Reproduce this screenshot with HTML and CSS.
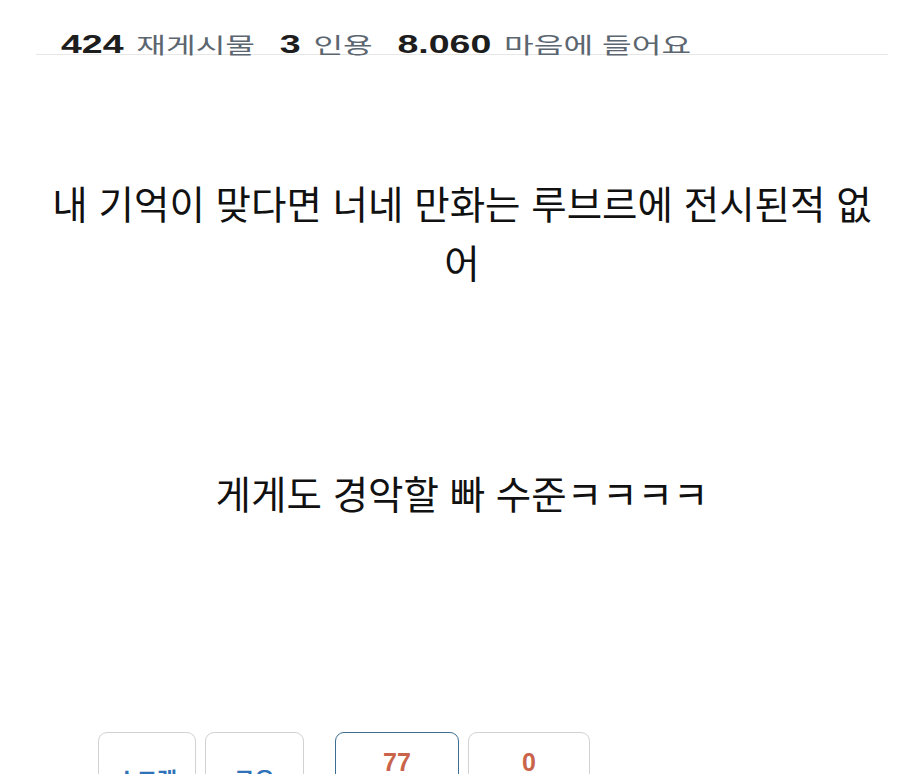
FILE: index.html
```html
<!DOCTYPE html>
<html lang="ko">
<head>
<meta charset="utf-8">
<title>Post</title>
<link rel="stylesheet" href="styles.css">
</head>
<body>
<header class="stats">
  <div class="stats-row">
    <span class="num">424</span><span class="lbl">재게시물</span>
    <span class="num">3</span><span class="lbl">인용</span>
    <span class="num">8.060</span><span class="lbl">마음에 들어요</span>
  </div>
</header>
<main class="post">
  <p class="line">내 기억이 맞다면 너네 만화는 루브르에 전시된적 없어</p>
  <p class="line second">게게도 경악할 빠 수준ㅋㅋㅋㅋ</p>
</main>
<nav class="actions">
  <div class="btn plain"><span class="btn-label">스크랩</span></div>
  <div class="btn plain wide2"><span class="btn-label">공유</span></div>
  <div class="btn vote up"><span class="count">77</span><span class="btn-label">추천</span></div>
  <div class="btn vote"><span class="count">0</span><span class="btn-label">비추천</span></div>
</nav>
</body>
</html>
```
FILE: styles.css
```css
html, body {
  margin: 0;
  padding: 0;
  background: #ffffff;
}
body {
  height: 774px;
  overflow: hidden;
  font-family: "Noto Sans CJK KR", "Noto Sans", sans-serif;
}
.stats {
  margin: 0 12px 0 36px;
  height: 54px;
  border-bottom: 1px solid #e6e6e6;
}
.stats-row {
  display: flex;
  align-items: baseline;
  width: max-content;
  margin-left: 25px;
  padding-top: 30px;
  line-height: 28px;
  transform: scaleX(1.5);
  transform-origin: left center;
  white-space: nowrap;
}
.num {
  font-family: "Liberation Sans", Arial, sans-serif;
  font-weight: bold;
  font-size: 25px;
  color: #1d1d1d;
  margin-right: 8.5px;
}
.lbl {
  font-family: "Noto Sans CJK KR", sans-serif;
  font-size: 21.5px;
  color: #5c6670;
  margin-right: 16.5px;
}
.post {
  margin: 0 23px 0 47px;
  padding-top: 118px;
  text-align: center;
  color: #111111;
}
.line {
  margin: 0;
  font-size: 38.5px;
  line-height: 59px;
}
.second {
  margin-top: 172px;
}
.actions {
  display: flex;
  gap: 9px;
  padding-left: 98px;
  margin-top: 210px;
}
.btn {
  box-sizing: border-box;
  height: 110px;
  border: 1.5px solid #d2d2d2;
  border-radius: 9px;
  display: flex;
  flex-direction: column;
  align-items: center;
}
.plain {
  width: 98px;
  padding-top: 30px;
}
.wide2 {
  width: 99px;
}
.plain .btn-label {
  color: #2f72b8;
  font-size: 22px;
  line-height: 30px;
  font-weight: bold;
}
.vote {
  width: 122px;
  padding-top: 14px;
}
.vote.up {
  width: 124px;
  margin-left: 22px;
  border-color: #3d6d90;
}
.count {
  font-family: "Liberation Sans", Arial, sans-serif;
  font-weight: bold;
  font-size: 25px;
  line-height: 30px;
  color: #c9644b;
}
.vote .btn-label {
  font-size: 18px;
  color: #555;
}
```
